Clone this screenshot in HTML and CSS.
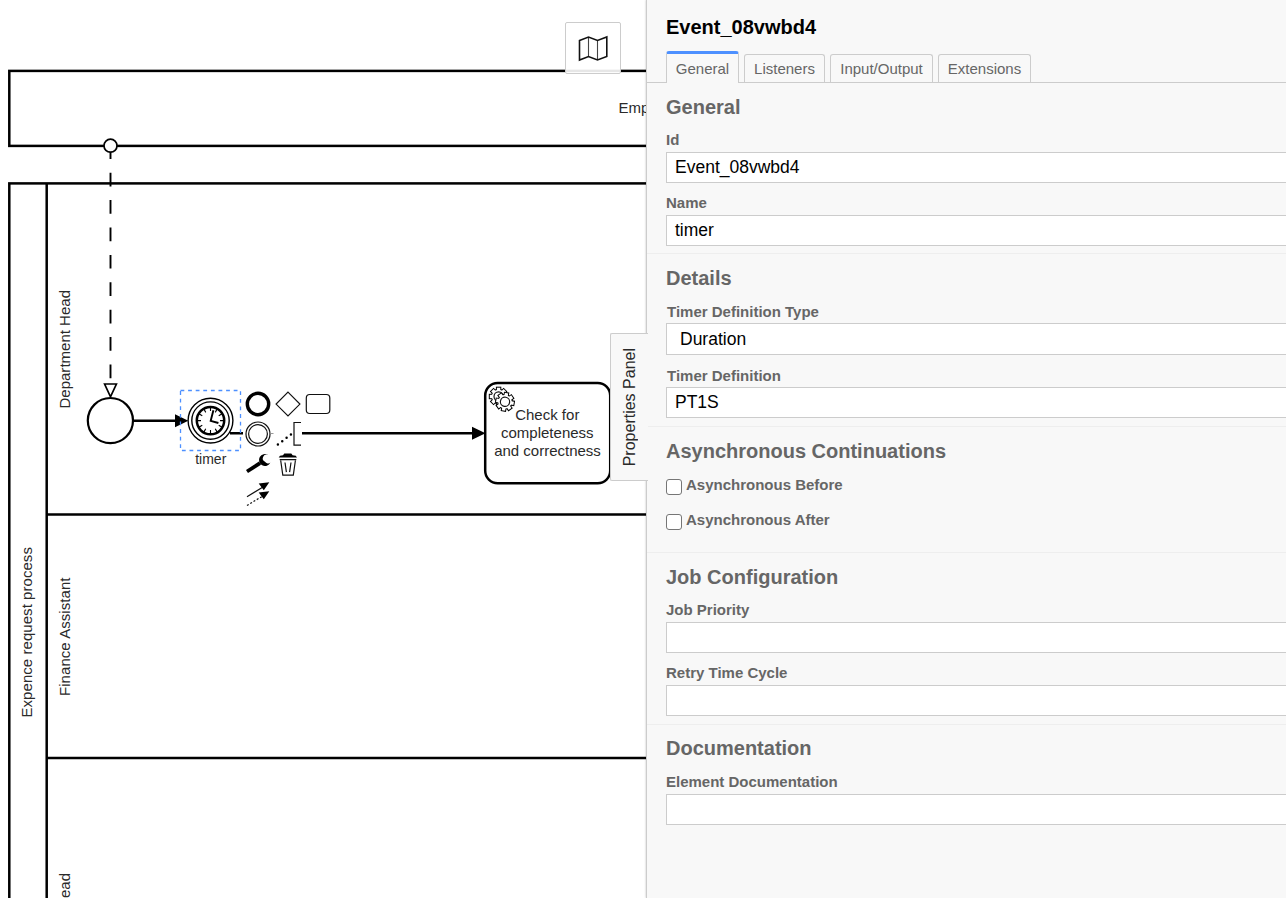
FILE: index.html
```html
<!DOCTYPE html>
<html lang="en">
<head>
<meta charset="utf-8">
<title>Process modeler</title>
<link rel="stylesheet" href="styles.css">
</head>
<body>
<div class="modeler">
  <main class="canvas">
    <svg class="diagram" width="646" height="898" viewBox="0 0 646 898">
      <defs>
        <g id="gear">
          <rect x="-1.7" y="-8.8" width="3.4" height="17.6"/>
          <rect x="-1.7" y="-8.8" width="3.4" height="17.6" transform="rotate(45)"/>
          <rect x="-1.7" y="-8.8" width="3.4" height="17.6" transform="rotate(90)"/>
          <rect x="-1.7" y="-8.8" width="3.4" height="17.6" transform="rotate(135)"/>
          <circle r="6.7"/>
        </g>
      </defs>

      <!-- pools and lanes -->
      <g class="shape">
        <rect x="9.3" y="70.9" width="760" height="75"/>
        <rect x="9.3" y="183.4" width="760" height="760"/>
        <path d="M46.7 183.4V900M46.7 514.4H646M46.7 757.9H646"/>
      </g>
      <text class="label" x="618.6" y="113">Emp</text>
      <text class="label wide" transform="translate(32 717.5) rotate(-90)" textLength="170.5">Expence request process</text>
      <text class="label" transform="translate(70 408.5) rotate(-90)" textLength="118.5">Department Head</text>
      <text class="label" transform="translate(70 696) rotate(-90)" textLength="118.5">Finance Assistant</text>
      <text class="label" transform="translate(70 898) rotate(-90)">ead</text>

      <!-- message flow -->
      <path class="flow" d="M110.5 145.3V383" stroke-dasharray="13.7 13.7"/>
      <circle class="thin" cx="110.5" cy="145.7" r="6.5"/>
      <path class="thin" d="M104.6 384H116.4L110.5 396.8Z"/>
      <circle class="event" cx="110.4" cy="420.6" r="22.6"/>

      <!-- sequence flows -->
      <path class="shape" d="M133 420.7H177M230 433.3H243M302 433.3H474"/>
      <path d="M175 414.2L188.3 420.7L175 427.2ZM472 426.8L485.5 433.3L472 439.8Z"/>

      <!-- timer event -->
      <circle class="ring" cx="210.5" cy="420.6" r="22.4"/>
      <circle class="ring" cx="210.5" cy="420.6" r="18.7"/>
      <circle class="shape" cx="210.5" cy="420.6" r="13.7"/>
      <g class="ticks" transform="translate(210.5 420.6)">
        <path id="tick" d="M0 -13V-9.5M0 13V9.5M-13 0H-9.5M13 0H9.5"/>
        <use href="#tick" transform="rotate(30)"/>
        <use href="#tick" transform="rotate(60)"/>
      </g>
      <path class="hands" d="M213.4 410.3L210.7 420.8L218.4 423"/>
      <rect class="selection" x="180.5" y="390.5" width="60" height="60"/>
      <text class="label small" x="195.2" y="464">timer</text>

      <!-- service task -->
      <rect class="shape" x="485.2" y="382.9" width="125" height="100.3" rx="12.5"/>
      <g transform="translate(498.6 396.5)">
        <use class="gear-line" href="#gear"/><use class="gear-fill" href="#gear"/>
        <circle class="icon" r="4.6"/>
      </g>
      <g transform="translate(505 401.8) rotate(10)">
        <use class="gear-line" href="#gear"/><use class="gear-fill" href="#gear"/>
        <circle class="icon" r="4.6"/>
      </g>
      <g class="label middle">
        <text x="547.3" y="420">Check for</text>
        <text x="547.3" y="438">completeness</text>
        <text x="547.5" y="456">and correctness</text>
      </g>

      <!-- context pad -->
      <circle class="end-icon" cx="258" cy="404" r="10.7"/>
      <path class="icon" d="M288 392.2L299.9 404.1L288 416L276.1 404.1Z"/>
      <rect class="icon" x="306.3" y="394.5" width="23.5" height="19" rx="3.5"/>
      <circle class="icon" cx="258" cy="434" r="12"/>
      <circle class="icon" cx="258" cy="434" r="9.4"/>
      <path stroke="#999" d="M270.5 433.5H273.5"/>
      <path class="icon" d="M301 422.5H294V445.2H301"/>
      <path class="dots" d="M277.9 444.6L291.3 434.2"/>
      <path class="wrench" d="M247 471.5L260 463.2"/>
      <path d="M268.2 455A6 6 0 1 0 270.4 462.6A3.6 3.6 0 0 1 265 461.8A3.6 3.6 0 0 1 268.2 455Z"/>
      <path d="M278.7 457.4L280 455.8L283 455.2L284.3 453.6H291.3L292.6 455.2L295.8 455.8L297 457.4Z"/>
      <path class="icon" d="M279.7 459.7H296.3M280.7 460.5L282.8 475.2H293.3L295.4 460.5"/>
      <path class="icon" d="M285 462.5L286.4 472.2M291 462.5L289.6 472.2"/>
      <path class="icon" d="M247 496.7L263 487"/>
      <path class="icon" stroke-dasharray="2 1.8" d="M247 505.5L262 496.5"/>
      <path d="M269.3 482.3L263.8 490.2L258.7 483.6ZM269.3 491.3L263.8 499.2L258.7 492.6Z"/>
    </svg>
    <button class="minimap-toggle" aria-label="Toggle map">
      <svg width="32" height="28" viewBox="0 0 32 28">
        <path class="fold" d="M11.5 3V22.5M20.5 6.5V26"/>
        <path class="outline" d="M2.5 6.5L11.5 3L20.5 6.5L29.8 3V22.5L20.5 26L11.5 22.5L2.5 26Z"/>
      </svg>
    </button>
  </main>

  <aside class="panel">
    <div class="panel-toggle"><span>Properties Panel</span></div>
    <header class="title">Event_08vwbd4</header>
    <nav class="tabs">
      <a class="tab active">General</a>
      <a class="tab listeners">Listeners</a>
      <a class="tab io">Input/Output</a>
      <a class="tab extensions">Extensions</a>
    </nav>
    <section class="group">
      <h2>General</h2>
      <label>Id</label>
      <div class="field">Event_08vwbd4</div>
      <label>Name</label>
      <div class="field">timer</div>
    </section>
    <section class="group details">
      <h2>Details</h2>
      <label>Timer Definition Type</label>
      <div class="field select">Duration</div>
      <label>Timer Definition</label>
      <div class="field">PT1S</div>
    </section>
    <section class="group async">
      <h2>Asynchronous Continuations</h2>
      <div class="check"><span class="box"></span><span>Asynchronous Before</span></div>
      <div class="check"><span class="box"></span><span>Asynchronous After</span></div>
    </section>
    <section class="group">
      <h2>Job Configuration</h2>
      <label>Job Priority</label>
      <div class="field"></div>
      <label>Retry Time Cycle</label>
      <div class="field"></div>
    </section>
    <section class="group documentation">
      <h2>Documentation</h2>
      <label>Element Documentation</label>
      <div class="field"></div>
    </section>
  </aside>
</div>
</body>
</html>
```
FILE: styles.css
```css
* { box-sizing: border-box; }
body {
  margin: 0;
  background: #fff;
  font-family: "Liberation Sans", Arial, sans-serif;
}
.modeler {
  display: flex;
  height: 898px;
  overflow: hidden;
}
.canvas {
  position: relative;
  width: 646px;
  flex: none;
}
.diagram { display: block; }

.shape { fill: none; stroke: #000; stroke-width: 2.5; }
.event { fill: #fff; stroke: #000; stroke-width: 2.2; }
.thin { fill: #fff; stroke: #000; stroke-width: 1.7; }
.flow { fill: none; stroke: #000; stroke-width: 1.9; }
.ring { fill: none; stroke: #000; stroke-width: 1.4; }
.ticks { fill: none; stroke: #000; stroke-width: 1.1; }
.hands { fill: none; stroke: #000; stroke-width: 1.9; }
.selection { fill: none; stroke: #4d90ff; stroke-width: 1.3; stroke-dasharray: 3.8 3.8; }
.icon { fill: none; stroke: #111; stroke-width: 1.2; }
.end-icon { fill: none; stroke: #000; stroke-width: 3.4; }
.dots { fill: none; stroke: #000; stroke-width: 2.5; stroke-linecap: round; stroke-dasharray: 0 5.5; }
.wrench { fill: none; stroke: #000; stroke-width: 3.8; }
.gear-line { fill: #000; stroke: #000; stroke-width: 2; }
.gear-fill { fill: #fff; stroke: none; }
.label { font-size: 15px; fill: #2a2a2a; }
.wide { letter-spacing: 0.05px; }
.small { font-size: 14px; }
.middle { text-anchor: middle; }

.minimap-toggle {
  position: absolute;
  left: 565px;
  top: 22px;
  width: 56px;
  height: 52px;
  padding: 0;
  display: flex;
  align-items: center;
  justify-content: center;
  border: 1px solid #ccc;
  border-radius: 2px;
  background: rgba(255, 255, 255, 0.9);
}
.outline { fill: none; stroke: #111; stroke-width: 1.6; }
.fold { fill: none; stroke: #444; stroke-width: 1.1; }

.panel {
  position: relative;
  width: 700px;
  flex: none;
  border-left: 1px solid #ccc;
  background: #f8f8f8;
  box-shadow: 0 0 2px rgba(0, 0, 0, 0.25);
  color: #666;
}
.panel-toggle {
  position: absolute;
  left: -37px;
  top: 333px;
  width: 38px;
  height: 148px;
  display: flex;
  align-items: center;
  justify-content: center;
  border: 1px solid #ccc;
  border-right: 0;
  border-radius: 2px 0 0 2px;
  background: #f8f8f8;
  color: #2a2a2a;
  font-size: 16px;
}
.panel-toggle span {
  writing-mode: vertical-rl;
  transform: rotate(180deg);
  white-space: nowrap;
}
.title {
  height: 51px;
  padding: 15px 19px 0;
  color: #000;
  font-size: 20px;
  font-weight: bold;
  line-height: 24px;
}
.tabs {
  display: flex;
  align-items: flex-end;
  gap: 5px;
  height: 32px;
  padding-left: 19px;
  border-bottom: 1px solid #ccc;
}
.tab {
  width: 73px;
  height: 28px;
  border: 1px solid #ccc;
  border-bottom: 0;
  border-radius: 3px 3px 0 0;
  font-size: 15px;
  line-height: 28px;
  text-align: center;
}
.tab.active {
  height: 32px;
  margin-bottom: -1px;
  border-top: 3px solid #4d90ff;
  background: #f8f8f8;
  line-height: 29px;
}
.listeners { width: 81px; }
.io { width: 103px; }
.extensions { width: 93px; }

.group {
  padding: 12px 0 7px 19px;
  border-bottom: 1px solid #eee;
}
.group + .group { padding-bottom: 8px; }
.group:last-child { border-bottom: 0; }
h2 {
  margin: 0 0 10px;
  font-size: 20px;
  line-height: 24px;
}
.documentation { padding-top: 11px; }
.documentation h2 { margin-bottom: 11px; }
label {
  display: block;
  height: 23px;
  font-size: 15px;
  font-weight: bold;
  line-height: 22px;
}
.field + label { margin-top: 9px; }
.details label { padding-left: 1px; line-height: 24px; }
.field {
  height: 31px;
  padding-left: 8px;
  border: 1px solid #ccc;
  background: #fff;
  color: #000;
  font-size: 17.5px;
  line-height: 28px;
}
.field.select { height: 32px; padding-left: 13px; line-height: 30px; }
.async { height: 126px; }
.check {
  display: flex;
  gap: 4px;
  height: 35px;
  font-size: 15px;
  font-weight: bold;
  line-height: 24px;
}
.box {
  width: 16px;
  height: 16px;
  margin-top: 6px;
  border: 1px solid #767676;
  border-radius: 3px;
  background: #fff;
}
```
